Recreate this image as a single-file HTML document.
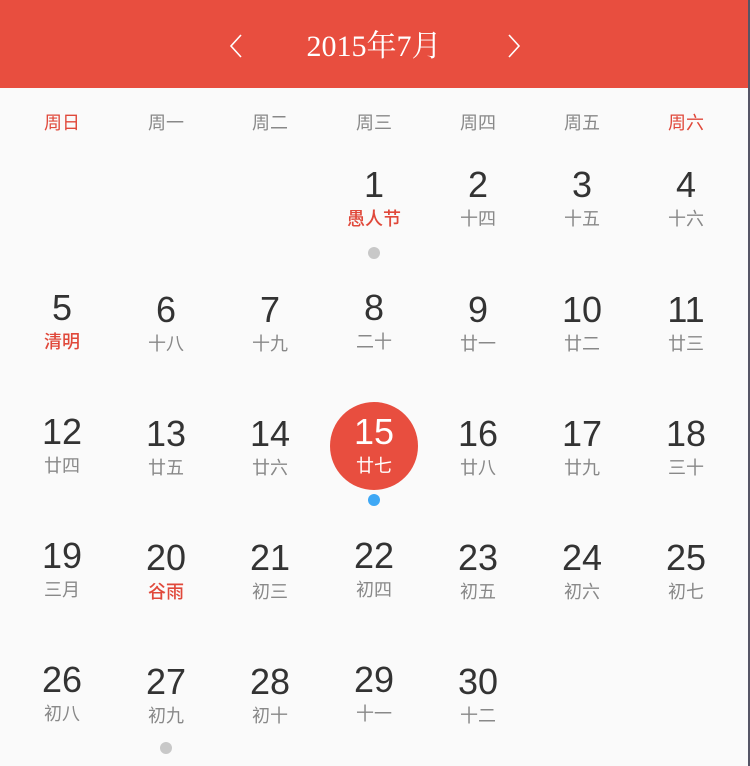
<!DOCTYPE html>
<html><head><meta charset="utf-8"><style>
*{margin:0;padding:0;box-sizing:border-box}
body{width:750px;height:766px;background:#fafafa;position:relative;overflow:hidden;font-family:"Liberation Sans","Noto Sans CJK SC",sans-serif}
.hd{position:absolute;left:0;top:0;width:748px;height:88px;background:#e84e3f;color:#fff}
.t{position:absolute;left:0;width:748px;top:29px;text-align:center;font-family:"Liberation Serif","Noto Serif CJK SC",serif;font-size:30px;line-height:36px}
.ar{position:absolute;top:33px}
.rb{position:absolute;left:748px;top:0;width:2px;height:766px;background:#555566}
.w{position:absolute;top:111px;width:104px;text-align:center;font-size:18px;line-height:24px;color:#888}
.r{color:#e0483a}
.c{position:absolute;width:104px;text-align:center}
.n{font-size:36px;line-height:40px;color:#333;display:block}
.l{font-size:18px;line-height:22px;color:#888;display:block;margin-top:3px}
.l.r{color:#e0483a;font-weight:500}
.d{position:absolute;width:12px;height:12px;border-radius:50%;background:#c8c8c8}
.sel{position:absolute;left:330px;top:402px;width:88px;height:88px;border-radius:50%;background:#e84e3f}
</style></head><body>
<div class="hd">
<svg class="ar" style="left:228px" width="16" height="26" viewBox="0 0 16 26"><path d="M13 2 L3 13 L13 24" stroke="#fff" stroke-width="1.6" fill="none"/></svg>
<div class="t">2015年7月</div>
<svg class="ar" style="left:506px" width="16" height="26" viewBox="0 0 16 26"><path d="M3 2 L13 13 L3 24" stroke="#fff" stroke-width="1.6" fill="none"/></svg>
</div>
<div class="rb"></div>
<div class="w r" style="left:10px">周日</div>
<div class="w" style="left:114px">周一</div>
<div class="w" style="left:218px">周二</div>
<div class="w" style="left:322px">周三</div>
<div class="w" style="left:426px">周四</div>
<div class="w" style="left:530px">周五</div>
<div class="w r" style="left:634px">周六</div>

<div class="sel"></div>

<div class="c" style="left:322px;top:165px"><span class="n">1</span><span class="l r">愚人节</span></div>
<div class="c" style="left:426px;top:165px"><span class="n">2</span><span class="l">十四</span></div>
<div class="c" style="left:530px;top:165px"><span class="n">3</span><span class="l">十五</span></div>
<div class="c" style="left:634px;top:165px"><span class="n">4</span><span class="l">十六</span></div>
<div class="d" style="left:368px;top:247px"></div>

<div class="c" style="left:10px;top:288px"><span class="n">5</span><span class="l r">清明</span></div>
<div class="c" style="left:114px;top:290px"><span class="n">6</span><span class="l">十八</span></div>
<div class="c" style="left:218px;top:290px"><span class="n">7</span><span class="l">十九</span></div>
<div class="c" style="left:322px;top:288px"><span class="n">8</span><span class="l">二十</span></div>
<div class="c" style="left:426px;top:290px"><span class="n">9</span><span class="l">廿一</span></div>
<div class="c" style="left:530px;top:290px"><span class="n">10</span><span class="l">廿二</span></div>
<div class="c" style="left:634px;top:290px"><span class="n">11</span><span class="l">廿三</span></div>

<div class="c" style="left:10px;top:412px"><span class="n">12</span><span class="l">廿四</span></div>
<div class="c" style="left:114px;top:414px"><span class="n">13</span><span class="l">廿五</span></div>
<div class="c" style="left:218px;top:414px"><span class="n">14</span><span class="l">廿六</span></div>
<div class="c" style="left:322px;top:412px"><span class="n" style="color:#fff">15</span><span class="l" style="color:#fff">廿七</span></div>
<div class="c" style="left:426px;top:414px"><span class="n">16</span><span class="l">廿八</span></div>
<div class="c" style="left:530px;top:414px"><span class="n">17</span><span class="l">廿九</span></div>
<div class="c" style="left:634px;top:414px"><span class="n">18</span><span class="l">三十</span></div>
<div class="d" style="left:368px;top:494px;background:#3ea8f5"></div>

<div class="c" style="left:10px;top:536px"><span class="n">19</span><span class="l">三月</span></div>
<div class="c" style="left:114px;top:538px"><span class="n">20</span><span class="l r">谷雨</span></div>
<div class="c" style="left:218px;top:538px"><span class="n">21</span><span class="l">初三</span></div>
<div class="c" style="left:322px;top:536px"><span class="n">22</span><span class="l">初四</span></div>
<div class="c" style="left:426px;top:538px"><span class="n">23</span><span class="l">初五</span></div>
<div class="c" style="left:530px;top:538px"><span class="n">24</span><span class="l">初六</span></div>
<div class="c" style="left:634px;top:538px"><span class="n">25</span><span class="l">初七</span></div>

<div class="c" style="left:10px;top:660px"><span class="n">26</span><span class="l">初八</span></div>
<div class="c" style="left:114px;top:662px"><span class="n">27</span><span class="l">初九</span></div>
<div class="c" style="left:218px;top:662px"><span class="n">28</span><span class="l">初十</span></div>
<div class="c" style="left:322px;top:660px"><span class="n">29</span><span class="l">十一</span></div>
<div class="c" style="left:426px;top:662px"><span class="n">30</span><span class="l">十二</span></div>
<div class="d" style="left:160px;top:742px"></div>
</body></html>
